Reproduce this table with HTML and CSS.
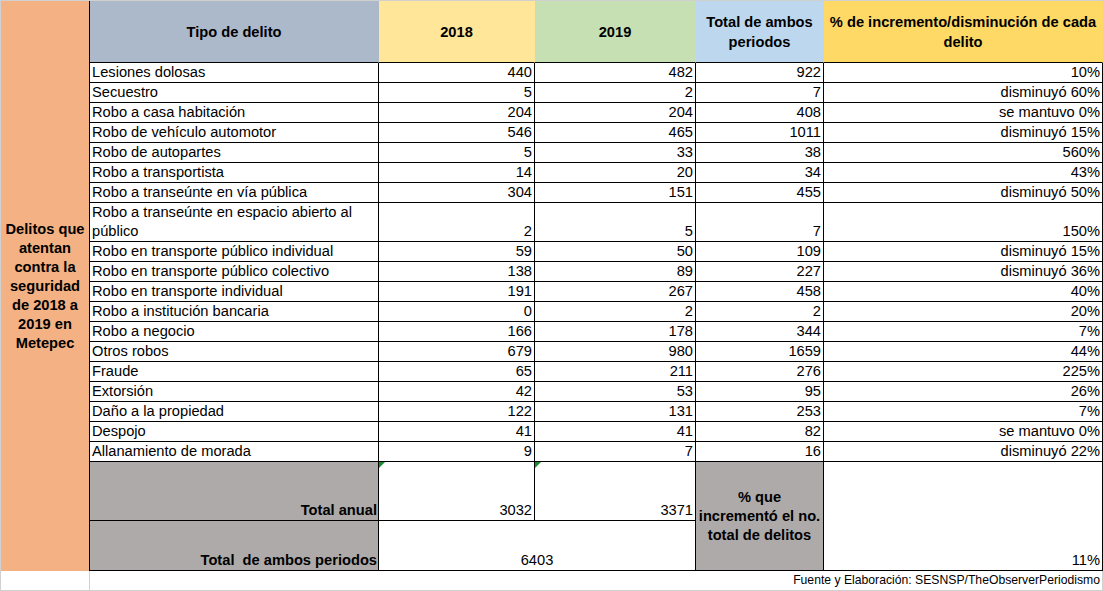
FILE: index.html
```html
<!DOCTYPE html>
<html lang="es">
<head>
<meta charset="utf-8">
<title>Delitos Metepec 2018-2019</title>
<link rel="stylesheet" href="styles.css">
</head>
<body>
<table class="sheet">
  <colgroup>
    <col class="c-side"><col class="c-tipo"><col class="c-y18"><col class="c-y19"><col class="c-tot"><col class="c-pct">
  </colgroup>
  <tr class="r-head">
    <td class="side" rowspan="22">Delitos que atentan contra la seguridad de 2018 a 2019 en Metepec</td>
    <th class="h-tipo">Tipo de delito</th>
    <th class="h-y18">2018</th>
    <th class="h-y19">2019</th>
    <th class="h-tot">Total de ambos periodos</th>
    <th class="h-pct">% de incremento/disminución de cada delito</th>
  </tr>
  <tr class="r"><td class="t">Lesiones dolosas</td><td class="n">440</td><td class="n">482</td><td class="n">922</td><td class="n">10%</td></tr>
  <tr class="r"><td class="t">Secuestro</td><td class="n">5</td><td class="n">2</td><td class="n">7</td><td class="n">disminuyó 60%</td></tr>
  <tr class="r"><td class="t">Robo a casa habitación</td><td class="n">204</td><td class="n">204</td><td class="n">408</td><td class="n">se mantuvo 0%</td></tr>
  <tr class="r"><td class="t">Robo de vehículo automotor</td><td class="n">546</td><td class="n">465</td><td class="n">1011</td><td class="n">disminuyó 15%</td></tr>
  <tr class="r"><td class="t">Robo de autopartes</td><td class="n">5</td><td class="n">33</td><td class="n">38</td><td class="n">560%</td></tr>
  <tr class="r"><td class="t">Robo a transportista</td><td class="n">14</td><td class="n">20</td><td class="n">34</td><td class="n">43%</td></tr>
  <tr class="r"><td class="t">Robo a transeúnte en vía pública</td><td class="n">304</td><td class="n">151</td><td class="n">455</td><td class="n">disminuyó 50%</td></tr>
  <tr class="r2"><td class="t wrap">Robo a transeúnte en espacio abierto al público</td><td class="n">2</td><td class="n">5</td><td class="n">7</td><td class="n">150%</td></tr>
  <tr class="r"><td class="t">Robo en transporte público individual</td><td class="n">59</td><td class="n">50</td><td class="n">109</td><td class="n">disminuyó 15%</td></tr>
  <tr class="r"><td class="t">Robo en transporte público colectivo</td><td class="n">138</td><td class="n">89</td><td class="n">227</td><td class="n">disminuyó 36%</td></tr>
  <tr class="r"><td class="t">Robo en transporte individual</td><td class="n">191</td><td class="n">267</td><td class="n">458</td><td class="n">40%</td></tr>
  <tr class="r"><td class="t">Robo a institución bancaria</td><td class="n">0</td><td class="n">2</td><td class="n">2</td><td class="n">20%</td></tr>
  <tr class="r"><td class="t">Robo a negocio</td><td class="n">166</td><td class="n">178</td><td class="n">344</td><td class="n">7%</td></tr>
  <tr class="r"><td class="t">Otros robos</td><td class="n">679</td><td class="n">980</td><td class="n">1659</td><td class="n">44%</td></tr>
  <tr class="r"><td class="t">Fraude</td><td class="n">65</td><td class="n">211</td><td class="n">276</td><td class="n">225%</td></tr>
  <tr class="r"><td class="t">Extorsión</td><td class="n">42</td><td class="n">53</td><td class="n">95</td><td class="n">26%</td></tr>
  <tr class="r"><td class="t">Daño a la propiedad</td><td class="n">122</td><td class="n">131</td><td class="n">253</td><td class="n">7%</td></tr>
  <tr class="r"><td class="t">Despojo</td><td class="n">41</td><td class="n">41</td><td class="n">82</td><td class="n">se mantuvo 0%</td></tr>
  <tr class="r"><td class="t">Allanamiento de morada</td><td class="n">9</td><td class="n">7</td><td class="n">16</td><td class="n">disminuyó 22%</td></tr>
  <tr class="r-anual">
    <td class="lbl">Total anual</td>
    <td class="n flag"><span class="tri"></span>3032</td>
    <td class="n flag"><span class="tri"></span>3371</td>
    <td class="pq" rowspan="2">% que incrementó el no. total de delitos</td>
    <td class="n" rowspan="2">11%</td>
  </tr>
  <tr class="r-ambos">
    <td class="lbl">Total&nbsp; de ambos periodos</td>
    <td class="c" colspan="2">6403</td>
  </tr>
  <tr class="r-foot">
    <td class="f-side"></td>
    <td class="f-note" colspan="5">Fuente y Elaboración: SESNSP/TheObserverPeriodismo</td>
  </tr>
</table>
</body>
</html>
```

FILE: styles.css
```css
html, body {
  margin: 0;
  background: #ffffff;
}

body {
  font-family: "Liberation Sans", Arial, sans-serif;
  font-size: 14.67px;
  color: #000000;
}

.sheet {
  border-collapse: separate;
  border-spacing: 0;
  table-layout: fixed;
  width: 1103px;
  border-top: 1px solid #d0d0d0;
  border-left: 1px solid #d0d0d0;
}

.c-side { width: 89px; }
.c-tipo { width: 289px; }
.c-y18 { width: 156px; }
.c-y19 { width: 161px; }
.c-tot { width: 128px; }
.c-pct { width: 279px; }

.sheet td,
.sheet th {
  padding: 0 2px;
  border-right: 1px solid #000000;
  border-bottom: 1px solid #000000;
  line-height: 19px;
  vertical-align: bottom;
  white-space: nowrap;
  overflow: hidden;
}

.r-head { height: 62px; }
.r { height: 20px; }
.r2 { height: 39px; }
.r-anual { height: 59px; }
.r-ambos { height: 50px; }
.r-foot { height: 20px; }

.sheet th {
  font-weight: bold;
  text-align: center;
  vertical-align: middle;
  line-height: 20px;
  white-space: normal;
  border-right-color: transparent;
}

.side {
  background: #f4b183;
  font-weight: bold;
  text-align: center;
  line-height: 20px;
  white-space: normal !important;
  vertical-align: middle !important;
  border-bottom: none !important;
}

.h-tipo { background: #acb9ca; }
.h-y18 { background: #ffe699; }
.h-y19 { background: #c6e0b4; }
.h-tot { background: #bdd7ee; }
.h-pct { background: #ffd966; }

.t { text-align: left; }
.t.wrap { white-space: normal; }
.n { text-align: right; }
.c { text-align: center; }

.lbl {
  background: #aeaaaa;
  font-weight: bold;
  text-align: right;
  padding-right: 1px !important;
}

.pq {
  background: #aeaaaa;
  font-weight: bold;
  text-align: center;
  vertical-align: middle !important;
  line-height: 20px;
  white-space: normal !important;
}

.flag { position: relative; }

.tri {
  position: absolute;
  left: 0;
  top: 0;
  width: 0;
  height: 0;
  border-top: 6px solid #1c8a2e;
  border-right: 6px solid transparent;
}

.sheet .f-side,
.sheet .f-note {
  border-right-color: #d0d0d0;
  border-bottom-color: #d0d0d0;
}

.f-note {
  text-align: right;
  font-size: 12.2px;
  line-height: 17px;
}
```
